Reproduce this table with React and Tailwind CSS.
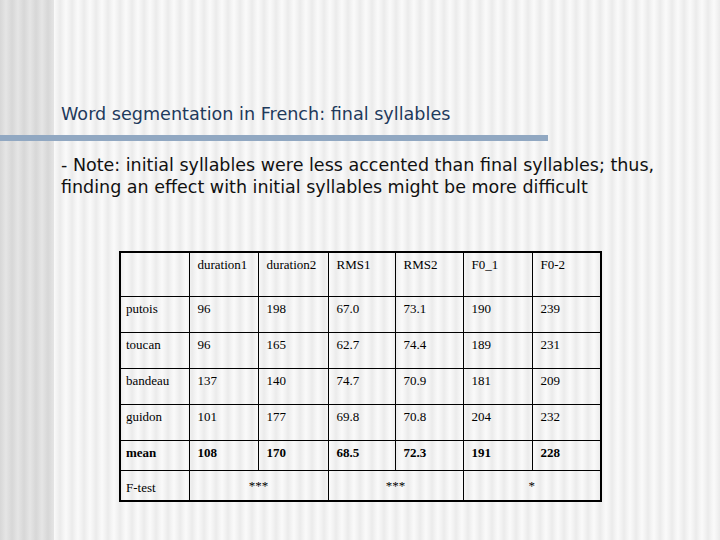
const headers = ['', 'duration1', 'duration2', 'RMS1', 'RMS2', 'F0_1', 'F0-2'];

const rows = [
  ['putois', '96', '198', '67.0', '73.1', '190', '239'],
  ['toucan', '96', '165', '62.7', '74.4', '189', '231'],
  ['bandeau', '137', '140', '74.7', '70.9', '181', '209'],
  ['guidon', '101', '177', '69.8', '70.8', '204', '232'],
];

const mean = ['mean', '108', '170', '68.5', '72.3', '191', '228'];

const colWidths = ['w-[69px]', 'w-[69px]', 'w-[70px]', 'w-[67px]', 'w-[68px]', 'w-[69px]', 'w-[69px]'];

function Cell({ children, first, className = '' }) {
  return (
    <td className={`border border-black align-top pt-1 ${first ? 'pl-[5px]' : 'pl-2'} ${className}`}>
      {children}
    </td>
  );
}

export default function App() {
  return (
    <div
      className="w-[720px] h-[540px] overflow-hidden flex flex-col bg-[linear-gradient(to_right,rgba(0,0,0,0.085)_54px,transparent_54px),repeating-linear-gradient(90deg,#ebebeb_0px,#f3f3f3_3px,#fafafa_6px,#f3f3f3_9px,#ebebeb_12px)]"
    >
      {/* Title */}
      <div className="pl-[61px] pt-[103px] h-[135px] text-[17.6px] leading-[22px] text-[#1f3a5c] font-['DejaVu_Sans',sans-serif]">
        Word segmentation in French: final syllables
      </div>

      {/* Rule */}
      <div className="w-[548px] h-[6px] bg-[#91a8c2]" />

      {/* Note */}
      <div className="pl-[61px] pt-[13px] text-[17.5px] leading-[22px] text-[#111] font-['DejaVu_Sans',sans-serif]">
        <p>- Note: initial syllables were less accented than final syllables; thus,</p>
        <p>finding an effect with initial syllables might be more difficult</p>
      </div>

      {/* Table */}
      <div className="pl-[119px] pt-[53px]">
        <table className="table-fixed w-[481px] border-collapse border-2 border-black text-[13px] leading-[15px] text-black font-['Liberation_Serif',serif]">
          <colgroup>
            {colWidths.map((w, i) => (
              <col key={i} className={w} />
            ))}
          </colgroup>
          <tbody>
            <tr className="h-[44px]">
              {headers.map((h, i) => (
                <Cell key={i} first={i === 0}>{h}</Cell>
              ))}
            </tr>
            {rows.map((r) => (
              <tr key={r[0]} className="h-[36px]">
                {r.map((v, i) => (
                  <Cell key={i} first={i === 0}>{v}</Cell>
                ))}
              </tr>
            ))}
            <tr className="h-[30px] font-bold">
              {mean.map((v, i) => (
                <Cell key={i} first={i === 0}>{v}</Cell>
              ))}
            </tr>
            <tr className="h-[31px]">
              <td className="border border-black align-middle pl-[5px] pt-1">F-test</td>
              <td colSpan={2} className="border border-black align-middle text-center">***</td>
              <td colSpan={2} className="border border-black align-middle text-center">***</td>
              <td colSpan={2} className="border border-black align-middle text-center">*</td>
            </tr>
          </tbody>
        </table>
      </div>
    </div>
  );
}
